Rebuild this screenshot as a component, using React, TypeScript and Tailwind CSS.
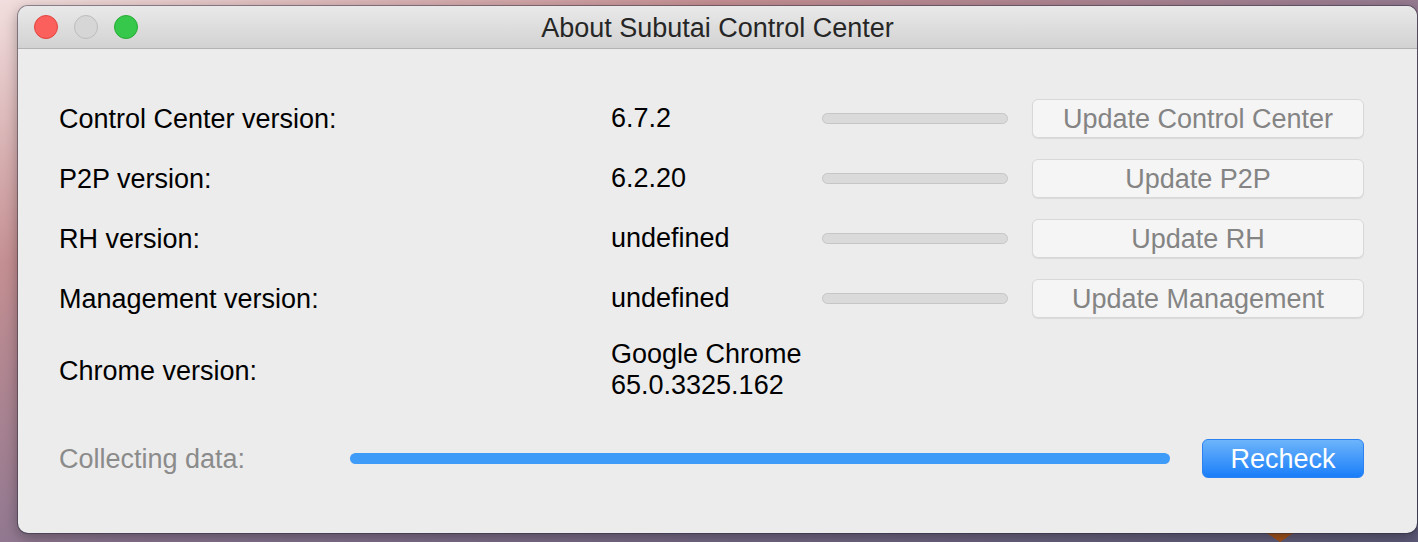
import React from 'react';

const font = { fontFamily: '"Liberation Sans", Arial, sans-serif' };

type Row = { label: string; value: string; button: string };

const rows: Row[] = [
  { label: 'Control Center version:', value: '6.7.2', button: 'Update Control Center' },
  { label: 'P2P version:', value: '6.2.20', button: 'Update P2P' },
  { label: 'RH version:', value: 'undefined', button: 'Update RH' },
  { label: 'Management version:', value: 'undefined', button: 'Update Management' },
];

const TrafficLights: React.FC = () => (
  <div className="flex items-center gap-4 pl-4">
    <span className="w-6 h-6 rounded-full bg-[#fc605c] border border-[#e0443e]" />
    <span className="w-6 h-6 rounded-full bg-[#d6d6d6] border border-[#bcbcbc]" />
    <span className="w-6 h-6 rounded-full bg-[#35c84a] border border-[#27aa35]" />
  </div>
);

const App: React.FC = () => {
  return (
    <div
      className="relative w-[1418px] h-[542px] overflow-hidden bg-[linear-gradient(160deg,#f2dede_0%,#c48f92_25%,#8a7590_55%,#5c5a78_100%)]"
      style={font}
    >
      <div className="absolute right-[120px] bottom-0 w-[36px] h-[12px] bg-[#a5531c] [clip-path:polygon(0_0,100%_0,50%_100%)]" />
      <div className="relative ml-[18px] mt-[6px] w-[1399px] h-[527px] rounded-[10px] bg-[#ececec] overflow-hidden shadow-[0_0_0_1px_rgba(40,40,60,0.45),0_4px_14px_rgba(0,0,0,0.35)]">
        {/* title bar */}
        <div className="relative h-[43px] flex items-center border-b border-[#b3b3b3] bg-[linear-gradient(#e9e9e9,#d2d2d2)]">
          <TrafficLights />
          <div className="absolute inset-0 pt-[3px] flex items-center justify-center text-[27px] text-[#262626]">
            About Subutai Control Center
          </div>
        </div>

        {/* content */}
        <div className="pt-[50px] pl-[41px] text-[27px] text-black">
          <div className="grid grid-cols-[552px_211px_210px_332px] gap-y-[21px] items-center">
            {rows.map((r) => (
              <React.Fragment key={r.label}>
                <div className="h-[39px] pt-[2px] flex items-center">{r.label}</div>
                <div className="h-[39px] flex items-center">{r.value}</div>
                <div className="h-[11px] w-[186px] rounded-full bg-[#dadada] border border-[#c6c6c6]" />
                <button
                  className="h-[39px] w-[332px] pt-[2px] rounded-[6px] bg-[#f5f5f5] border border-[#d8d8d8] shadow-[0_1px_1px_rgba(0,0,0,0.08)] text-[#848484] text-[27px] flex items-center justify-center"
                  style={font}
                >
                  {r.button}
                </button>
              </React.Fragment>
            ))}
            <div className="h-[62px] pt-[2px] flex items-center">Chrome version:</div>
            <div className="h-[62px] flex flex-col justify-center leading-[31px] col-span-3">
              <span>Google Chrome</span>
              <span>65.0.3325.162</span>
            </div>
          </div>

          <div className="flex items-center mt-[38px] h-[39px]">
            <div className="w-[291px] pt-[2px] text-[#8b8b8b]">Collecting data:</div>
            <div className="w-[820px] h-[11px] rounded-full bg-[#3e9bf8]" />
            <button
              className="ml-[32px] h-[39px] w-[162px] pt-[2px] rounded-[6px] bg-[linear-gradient(#6db4fb,#1a7ef9)] border border-[#2b82f0] text-white text-[27px] flex items-center justify-center"
              style={font}
            >
              Recheck
            </button>
          </div>
        </div>
      </div>
    </div>
  );
};

export default App;
